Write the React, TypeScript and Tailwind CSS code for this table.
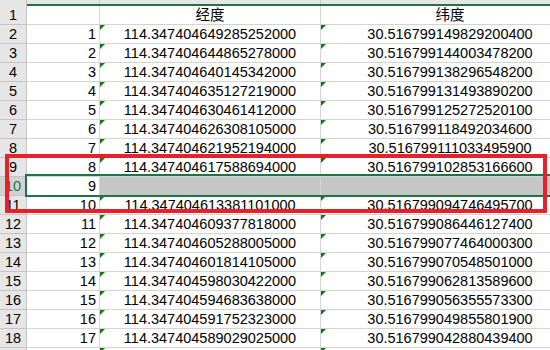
import React from "react";

const data: [string, string, string][] = [
  ["", "经度", "纬度"],
  ["1", "114.347404649285252000", "30.516799149829200400"],
  ["2", "114.347404644865278000", "30.516799144003478200"],
  ["3", "114.347404640145342000", "30.516799138296548200"],
  ["4", "114.347404635127219000", "30.516799131493890200"],
  ["5", "114.347404630461412000", "30.516799125272520100"],
  ["6", "114.347404626308105000", "30.516799118492034600"],
  ["7", "114.347404621952194000", "30.516799111033495900"],
  ["8", "114.347404617588694000", "30.516799102853166600"],
  ["9", "", ""],
  ["10", "114.347404613381101000", "30.516799094746495700"],
  ["11", "114.347404609377818000", "30.516799086446127400"],
  ["12", "114.347404605288005000", "30.516799077464000300"],
  ["13", "114.347404601814105000", "30.516799070548501000"],
  ["14", "114.347404598030422000", "30.516799062813589600"],
  ["15", "114.347404594683638000", "30.516799056355573300"],
  ["16", "114.347404591752323000", "30.516799049855801900"],
  ["17", "114.347404589029025000", "30.516799042880439400"],
  ["18", "114.347404586000000000", "30.516799036000000000"],
];

function Tri() {
  return (
    <div className="absolute left-0 top-0 w-0 h-0 border-t-[5px] border-r-[5px] border-t-[#0f7a0f] border-r-transparent" />
  );
}

export default function App() {
  return (
    <div className="relative w-[550px] h-[350px] overflow-hidden bg-white font-['Liberation_Sans','Noto_Sans_CJK_SC',sans-serif] text-[14.5px] text-black">
      {/* column header strip */}
      <div className="flex h-[6px]">
        <div className="w-[27px] shrink-0 h-[6px] bg-[#e6e6e6] border-r border-[#bfbfbf]" />
        <div className="flex shrink-0 h-[6px] bg-[#e6e6e6] border-b-2 border-[#217346] overflow-hidden">
          <div className="w-[73px] shrink-0 border-r border-[#c8c8c8] flex justify-center items-end overflow-hidden">
            <span className="leading-[14px] text-[13px] text-[#444] translate-y-[-8px]">A</span>
          </div>
          <div className="w-[221px] shrink-0 border-r border-[#c8c8c8] flex justify-center items-end overflow-hidden">
            <span className="leading-[14px] text-[13px] text-[#444] translate-y-[-8px]">B</span>
          </div>
          <div className="w-[258px] shrink-0 flex justify-center items-end overflow-hidden">
            <span className="leading-[14px] text-[13px] text-[#444] translate-y-[-8px]">C</span>
          </div>
        </div>
      </div>
      {data.map((r, i) => {
        const rowNum = i + 1;
        const sel = rowNum === 10;
        const tri = rowNum >= 2 && !sel;
        return (
          <div key={i} className="flex h-[19px]">
            <div
              className={`w-[27px] shrink-0 border-r border-b border-[#c4c4c4] flex items-end justify-center leading-[17px] ${
                sel ? "bg-[#d2d2d2] text-[#217346]" : "bg-[#e6e6e6] text-black"
              }`}
            >
              {rowNum}
            </div>
            <div className="w-[73px] shrink-0 border-r border-b border-[#d4d4d4] flex items-end justify-end pr-[3px] leading-[17px]">
              {r[0]}
            </div>
            <div
              className={`relative w-[221px] shrink-0 border-r border-b border-[#d4d4d4] flex items-end justify-center leading-[17px] ${
                sel ? "bg-[#c6c6c6]" : ""
              }`}
            >
              {tri && <Tri />}
              {r[1]}
            </div>
            <div
              className={`relative w-[258px] shrink-0 border-b border-[#d4d4d4] flex items-end justify-center leading-[17px] ${
                sel ? "bg-[#c6c6c6]" : ""
              }`}
            >
              {tri && <Tri />}
              {r[2]}
            </div>
          </div>
        );
      })}
      {/* selection outline */}
      <div className="absolute left-[25px] top-[174px] w-[560px] h-[23px] border-2 border-[#217346]" />
      {/* red annotation box */}
      <div className="absolute left-[5px] top-[154px] w-[542px] h-[59px] border-4 border-[#e8202a]" />
    </div>
  );
}
